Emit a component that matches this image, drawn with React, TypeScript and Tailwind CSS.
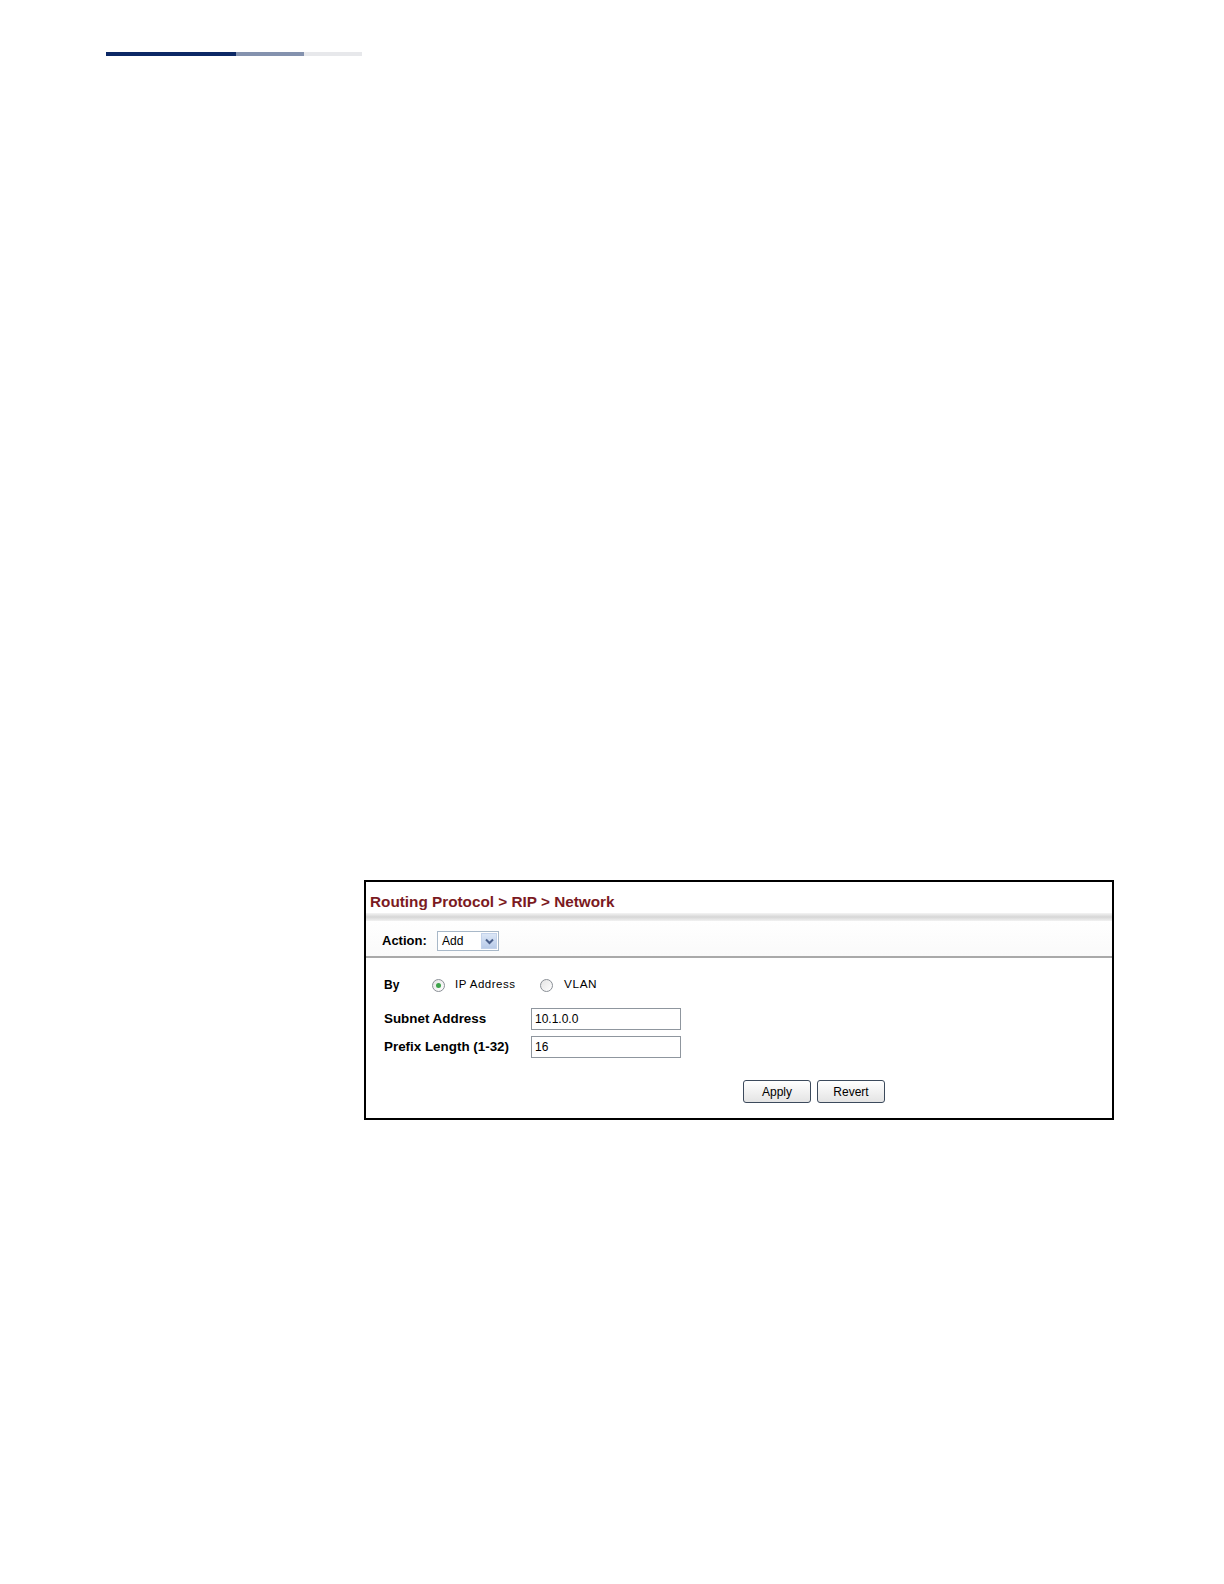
import React from "react";

export default function App() {
  return (
    <div className="min-h-[1584px] w-[1224px] bg-white" style={{ fontFamily: '"Liberation Sans", Arial, sans-serif' }}>
      <div className="pt-[52px] pl-[106px] flex h-[56px]">
        <div className="w-[130px] h-[4px] bg-[#0c2865]" />
        <div className="w-[68px] h-[4px] bg-[#8492ae]" />
        <div className="w-[58px] h-[4px] bg-[#e7e8eb]" />
      </div>
      <div className="mt-[824px] ml-[364px] w-[750px] h-[240px] border-2 border-black flex flex-col">
        <div className="h-[31px] flex items-end pl-[4px] pb-[4px]">
          <span className="text-[15.3px] font-bold text-[#7b1a22] leading-none">Routing Protocol &gt; RIP &gt; Network</span>
        </div>
        <div className="h-[8px] bg-gradient-to-b from-[#f4f4f4] via-[#d6d6d6] to-[#f2f2f2]" />
        <div className="h-[35px] flex items-center pt-[5px] pl-[16px] bg-gradient-to-b from-white to-[#fafafa]">
          <span className="text-[13px] font-bold text-black w-[55px]">Action:</span>
          <div className="w-[62px] h-[20px] border border-[#a8b8c8] flex items-center bg-white">
            <span className="text-[12px] pl-[4px] flex-1 text-black">Add</span>
            <div className="w-[16px] h-[16px] mr-[1px] bg-gradient-to-b from-[#dbe6f6] to-[#b9cbe8] border border-[#c3d2ea] flex items-center justify-center">
              <svg width="9" height="7" viewBox="0 0 9 7"><path d="M1 1.5 L4.5 5 L8 1.5" stroke="#4a5f8a" strokeWidth="2" fill="none" /></svg>
            </div>
          </div>
        </div>
        <div className="h-[2px] bg-[#a9a9a9]" />
        <div className="flex flex-col pl-[18px] pt-[18px]">
          <div className="flex items-center h-[18px]">
            <span className="text-[12px] font-bold text-black w-[48px]">By</span>
            <span className="w-[13px] h-[13px] rounded-full border border-[#8a8f96] bg-gradient-to-br from-[#e4e4e4] to-white flex items-center justify-center">
              <span className="w-[5px] h-[5px] rounded-full bg-[#3da34a]" />
            </span>
            <span className="text-[11.5px] tracking-[0.5px] text-black ml-[10px] w-[85px]">IP Address</span>
            <span className="w-[13px] h-[13px] rounded-full border border-[#8a8f96] bg-gradient-to-br from-[#e4e4e4] to-white" />
            <span className="text-[11.8px] tracking-[0.6px] text-black ml-[11px]">VLAN</span>
          </div>
          <div className="flex items-center mt-[14px] h-[22px]">
            <span className="text-[13.4px] font-bold text-black w-[147px]">Subnet Address</span>
            <div className="w-[150px] h-[22px] border border-[#8f969e] flex items-center pl-[3px] text-[12px] text-black">10.1.0.0</div>
          </div>
          <div className="flex items-center mt-[6px] h-[22px]">
            <span className="text-[13.4px] font-bold text-black w-[147px]">Prefix Length (1-32)</span>
            <div className="w-[150px] h-[22px] border border-[#8f969e] flex items-center pl-[3px] text-[12px] text-black">16</div>
          </div>
          <div className="flex mt-[22px] pl-[359px] gap-[6px]">
            <button className="w-[68px] h-[23px] rounded-[3px] border border-[#3c4a5c] bg-gradient-to-b from-white to-[#e4e4e4] text-[12px] text-black">Apply</button>
            <button className="w-[68px] h-[23px] rounded-[3px] border border-[#3c4a5c] bg-gradient-to-b from-white to-[#e4e4e4] text-[12px] text-black">Revert</button>
          </div>
        </div>
      </div>
    </div>
  );
}
